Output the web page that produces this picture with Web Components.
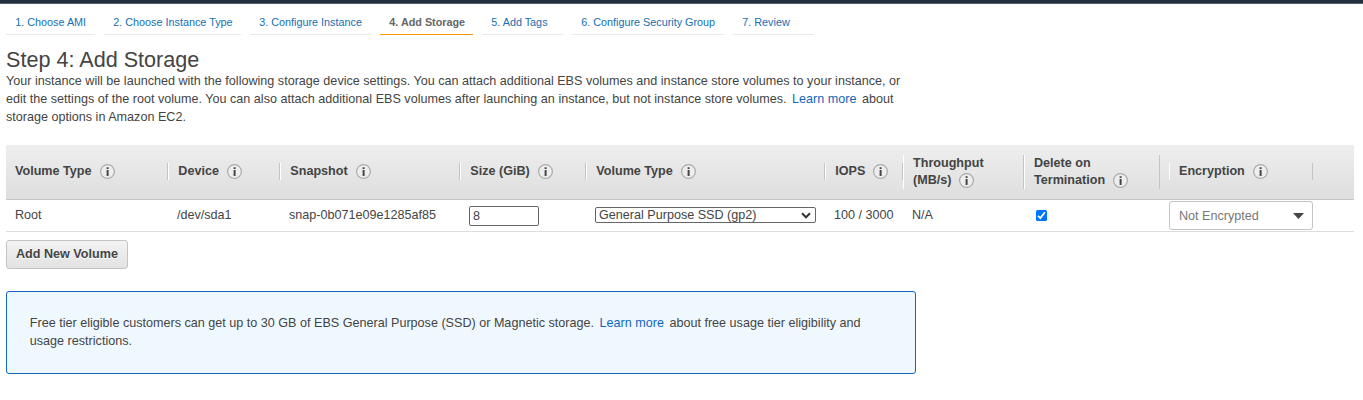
<!DOCTYPE html>
<html lang="en">
<head>
<meta charset="utf-8">
<title>Add Storage</title>
<style>
html,body{margin:0;padding:0}
body{background:#fff;color:#444;font:12.6px/18px "Liberation Sans",Arial,sans-serif;width:1363px;height:400px;overflow:hidden}
</style>
</head>
<body>
<storage-page></storage-page>
<script>
const define = (name, html) => customElements.define(name, class extends HTMLElement {
  connectedCallback() {
    if (this.shadowRoot) return;
    const t = document.createElement('template');
    t.innerHTML = html;
    this.attachShadow({mode: 'open'}).appendChild(t.content.cloneNode(true));
  }
});

define('step-tab', `<style>
:host{display:block;box-sizing:border-box;height:31px;border-bottom:1px solid #eaeaea;padding:9px 0 0 9.3px;font-size:10.8px;line-height:18px;color:#146eb4;white-space:nowrap}
:host([active]){border-color:#f90;color:#666;font-weight:bold}
</style><slot></slot>`);

define('text-link', `<style>
:host{display:inline;color:#1166bb;margin:0 2px}
</style><slot></slot>`);

define('info-icon', `<style>
:host{display:inline-block;width:15px;height:15px;vertical-align:-4px;margin-left:8px}
svg{display:block}
</style><svg width="15" height="15" viewBox="0 0 15 15"><circle cx="7.5" cy="7.5" r="6.9" fill="#eee" stroke="#aaa" stroke-width="1.2"/><path d="M6.6 3.2h2v1.7h-2zM6.6 6h2v6h-2z" fill="#444"/><path d="M5.8 6h.8v1h-.8zM5.8 11h.8v1h-.8zM8.6 11h.8v1h-.8z" fill="#bbb"/></svg>`);

define('head-cell', `<style>
:host{display:block;box-sizing:border-box;height:54px;padding-top:18px;font-weight:bold}
:host([tall]){padding-top:10px}
div{box-sizing:border-box;width:100%;line-height:17px;height:17px;border-left:1px solid #fff;border-right:1px solid #c4c4c4;padding-left:9.3px;white-space:nowrap}
:host([tall]) div{height:34px;padding-left:9px}
:host([first]) div{border-left-color:transparent;padding-left:8px}
:host([last]) div{padding-left:9px}
</style><div><slot></slot></div>`);

define('body-cell', `<style>
:host{display:flex;box-sizing:border-box;height:31px;padding:6px 0 0 9px;line-height:18px;white-space:nowrap}
:host([control]){padding-top:0;align-items:flex-start}
</style><slot></slot>`);

define('size-input', `<style>
:host{display:block;margin-top:6px}
input{display:block;box-sizing:border-box;width:70px;height:20px;margin:0;padding:0 3px;border:1px solid #666;border-radius:2px;background:#fff;color:#444;font:12.6px "Liberation Sans",Arial,sans-serif;outline:0}
</style><input value="8" aria-label="Size">`);

define('type-select', `<style>
:host{display:flex;box-sizing:border-box;width:221px;height:16px;margin-top:7px;border:1px solid #666;border-radius:2px;justify-content:space-between;align-items:center;padding:0 4px 0 3px;line-height:14px}
</style><slot></slot><svg width="10" height="7" viewBox="0 0 10 7"><path d="M1 1.3l4 4 4-4" fill="none" stroke="#333" stroke-width="2"/></svg>`);

define('check-mark', `<style>
:host{display:block;margin:10px 0 0 3px}
svg{display:block}
</style><svg width="11" height="11" viewBox="0 0 11 11"><rect width="11" height="11" rx="1.5" fill="#0075ff"/><path d="M2 5.8l2.3 2.3 4.6-5.8" fill="none" stroke="#fff" stroke-width="1.7"/></svg>`);

define('encrypt-select', `<style>
:host{display:flex;box-sizing:border-box;width:144px;height:29px;margin-top:1px;border:1px solid #c4c4c4;border-radius:3px;justify-content:space-between;align-items:center;padding:0 8px 0 9px;color:#777;background:#fff}
</style><slot></slot><svg width="11" height="6" viewBox="0 0 11 6"><path d="M0 0h11L5.5 6z" fill="#444"/></svg>`);

define('push-button', `<style>
:host{display:block;box-sizing:border-box;width:122px;height:29px;border:1px solid #c4c4c4;border-radius:3px;background:linear-gradient(#f3f3f3,#e2e2e2);font-weight:bold;line-height:26px;padding-left:9px;white-space:nowrap;text-shadow:0 1px 0 #fff}
</style><slot></slot>`);

define('notice-box', `<style>
:host{display:block;box-sizing:border-box;width:910px;height:83px;border:1px solid #1166bb;border-radius:3px;background:#f0f8ff;padding:22px 22.8px;white-space:nowrap}
</style><slot></slot>`);

define('volume-table', `<style>
:host{display:block;width:1348px}
.row{display:grid;grid-template-columns:162px 112px 180px 126px 239px 78px 121px 136px 9px 144px 1fr}
.head{background:linear-gradient(#eee,#dedede);border-bottom:1px solid #c4c4c4}
.body{border-bottom:1px solid #ddd}
.enc{grid-column:10}
</style>
<div class="row head">
<head-cell first>Volume Type<info-icon></info-icon></head-cell>
<head-cell>Device<info-icon></info-icon></head-cell>
<head-cell>Snapshot<info-icon></info-icon></head-cell>
<head-cell>Size (GiB)<info-icon></info-icon></head-cell>
<head-cell>Volume Type<info-icon></info-icon></head-cell>
<head-cell>IOPS<info-icon></info-icon></head-cell>
<head-cell tall>Throughput<br>(MB/s)<info-icon></info-icon></head-cell>
<head-cell tall>Delete on<br>Termination<info-icon></info-icon></head-cell>
<head-cell last class="enc">Encryption<info-icon></info-icon></head-cell>
</div>
<div class="row body">
<body-cell>Root</body-cell>
<body-cell>/dev/sda1</body-cell>
<body-cell>snap-0b071e09e1285af85</body-cell>
<body-cell control><size-input></size-input></body-cell>
<body-cell control><type-select>General Purpose SSD (gp2)</type-select></body-cell>
<body-cell>100 / 3000</body-cell>
<body-cell>N/A</body-cell>
<body-cell control><check-mark></check-mark></body-cell>
<body-cell control class="enc" style="padding-left:0"><encrypt-select>Not Encrypted</encrypt-select></body-cell>
</div>`);

define('storage-page', `<style>
:host{display:block}
.bar{height:3px;background:#232f3e;border-bottom:1px solid #596069}
nav{display:grid;grid-template-columns:89px 137px 121px 93px 81px 152px 81px;column-gap:9px;padding-left:6px}
main{padding-left:6px}
h1{margin:12px 0 0;font-size:21.6px;line-height:25px;font-weight:normal}
p{margin:0;white-space:nowrap}
volume-table{margin-top:19px}
push-button{margin-top:8px}
notice-box{margin-top:22px}
</style>
<div class="bar"></div>
<nav><step-tab>1. Choose AMI</step-tab><step-tab>2. Choose Instance Type</step-tab><step-tab>3. Configure Instance</step-tab><step-tab active>4. Add Storage</step-tab><step-tab>5. Add Tags</step-tab><step-tab>6. Configure Security Group</step-tab><step-tab>7. Review</step-tab></nav>
<main>
<h1>Step 4: Add Storage</h1>
<p>Your instance will be launched with the following storage device settings. You can attach additional EBS volumes and instance store volumes to your instance, or<br>edit the settings of the root volume. You can also attach additional EBS volumes after launching an instance, but not instance store volumes. <text-link>Learn more</text-link> about<br>storage options in Amazon EC2.</p>
<volume-table></volume-table>
<push-button>Add New Volume</push-button>
<notice-box>Free tier eligible customers can get up to 30 GB of EBS General Purpose (SSD) or Magnetic storage. <text-link>Learn more</text-link> about free usage tier eligibility and<br>usage restrictions.</notice-box>
</main>`);
</script>
</body>
</html>
